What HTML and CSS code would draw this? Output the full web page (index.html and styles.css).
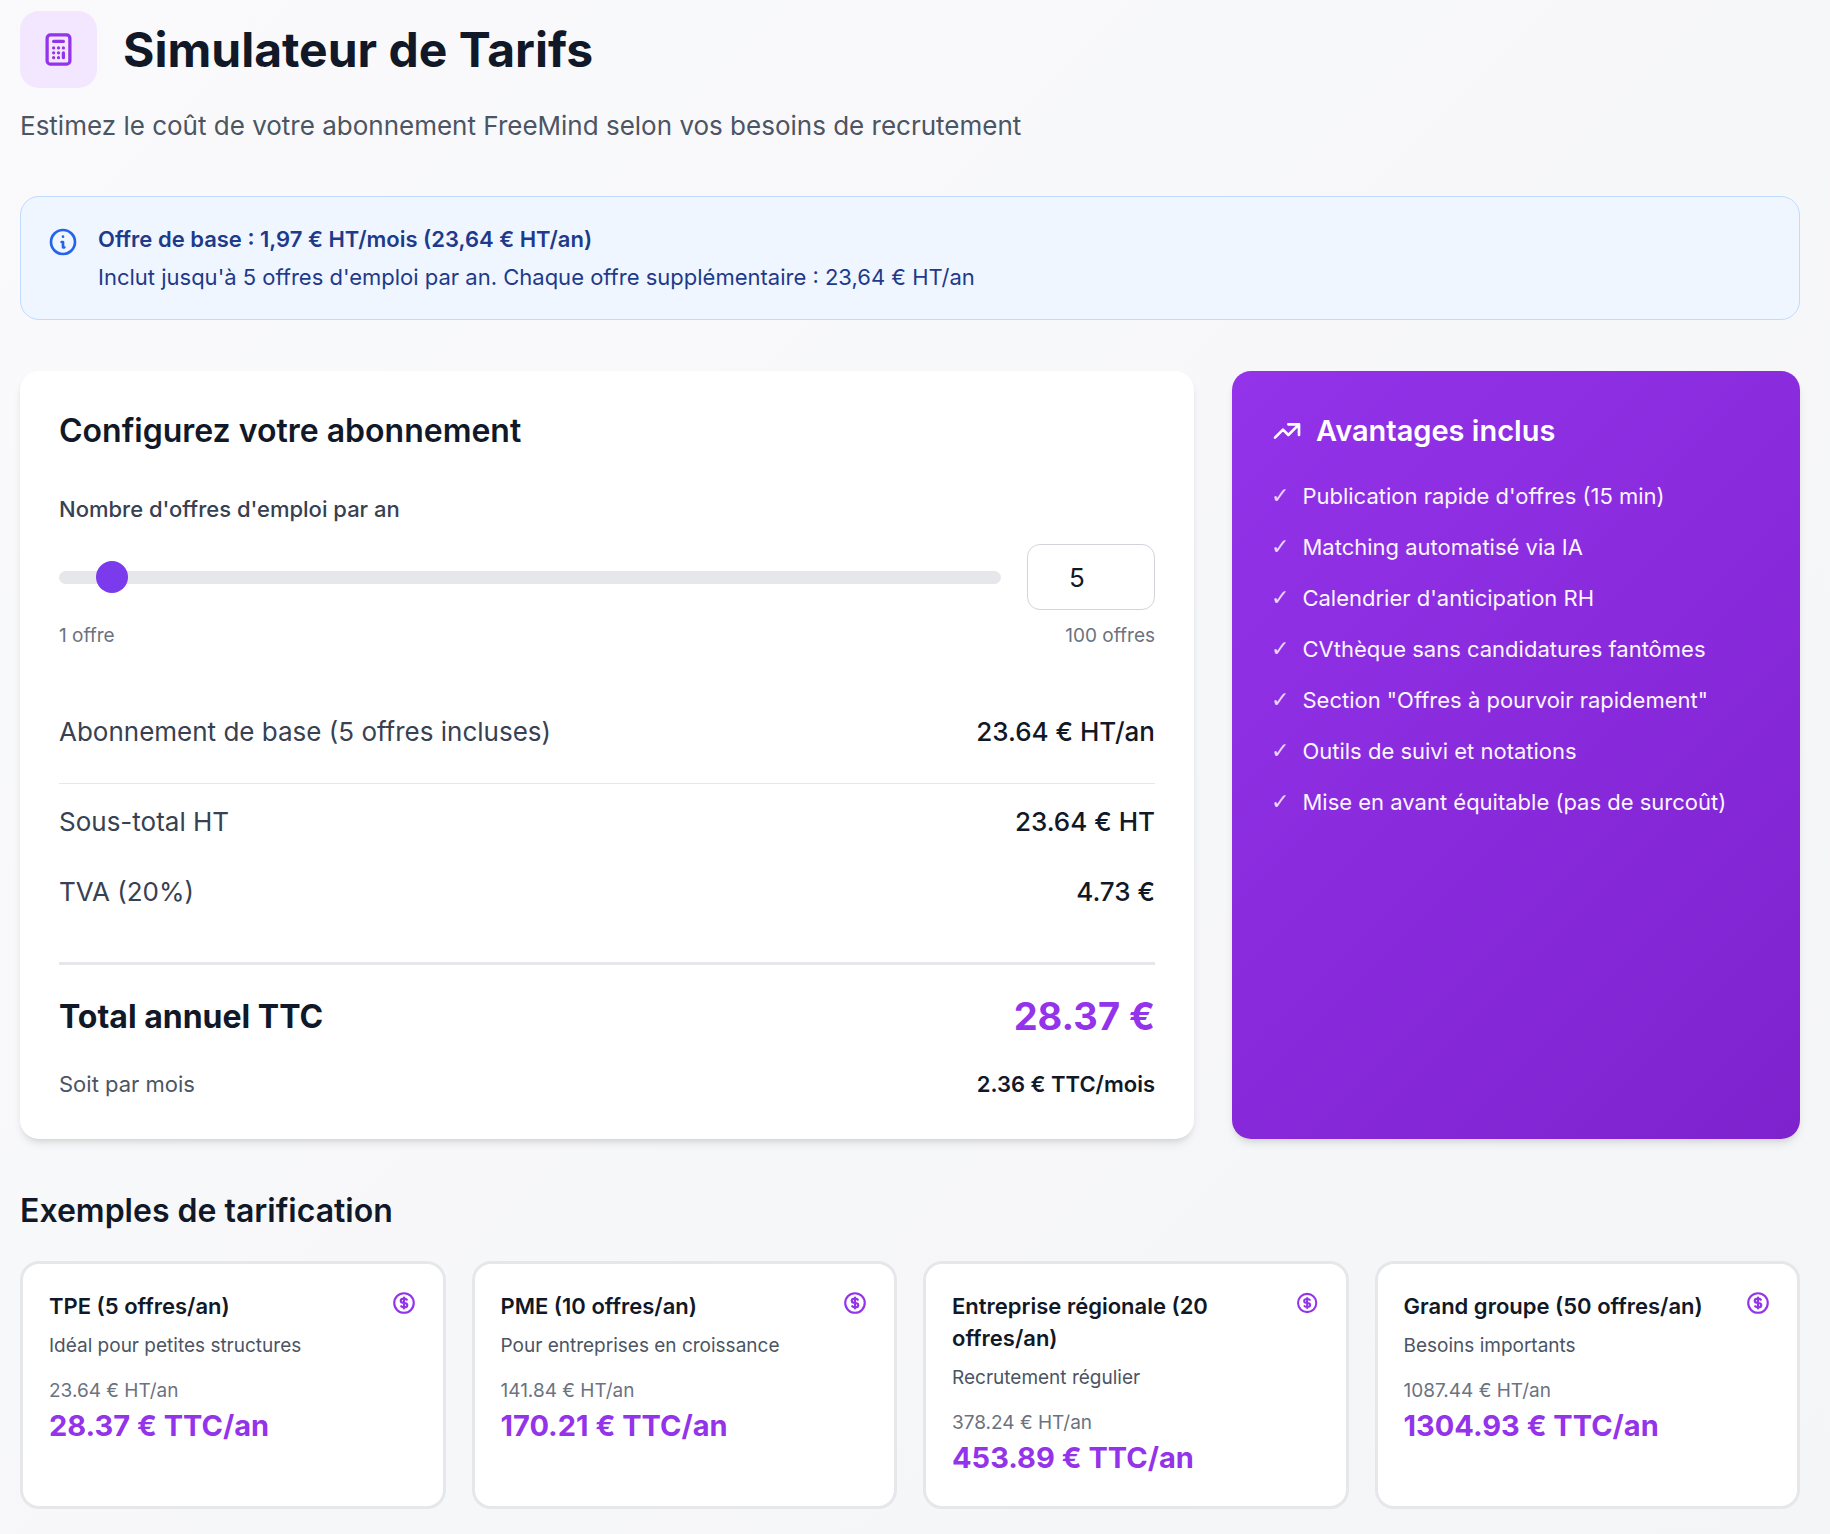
FILE: index.html
```html
<!DOCTYPE html>
<html lang="fr">
<head>
    <meta charset="UTF-8">
    <meta name="viewport" content="width=device-width, initial-scale=1.0">
    <title>Simulateur de Tarifs</title>
    <link rel="stylesheet" href="styles.css">
</head>
<body>
<header class="page-header">
    <div class="title-row">
        <div class="title-icon">
            <svg viewBox="0 0 24 24"><path d="M9 7h6m0 10v-3m-3 3h.01M9 17h.01M9 14h.01M12 14h.01M15 11h.01M12 11h.01M9 11h.01M7 21h10a2 2 0 002-2V5a2 2 0 00-2-2H7a2 2 0 00-2 2v14a2 2 0 002 2z"/></svg>
        </div>
        <h1>Simulateur de Tarifs</h1>
    </div>
    <p>Estimez le coût de votre abonnement FreeMind selon vos besoins de recrutement</p>
</header>

<section class="info">
    <svg viewBox="0 0 24 24"><path d="M13 16h-1v-4h-1m1-4h.01M21 12a9 9 0 11-18 0 9 9 0 0118 0z"/></svg>
    <div class="info-text">
        <p class="info-title">Offre de base : 1,97 € HT/mois (23,64 € HT/an)</p>
        <p>Inclut jusqu'à 5 offres d'emploi par an. Chaque offre supplémentaire : 23,64 € HT/an</p>
    </div>
</section>

<main class="simulator">
    <section class="card config">
        <h2>Configurez votre abonnement</h2>
        <label for="offersRange">Nombre d'offres d'emploi par an</label>
        <div class="slider-row">
            <input type="range" id="offersRange" min="1" max="100" value="5">
            <input type="number" id="offersNumber" min="1" max="100" value="5" aria-label="Nombre d'offres">
        </div>
        <div class="slider-limits">
            <span>1 offre</span>
            <span>100 offres</span>
        </div>
        <dl class="lines">
            <div class="line base">
                <dt>Abonnement de base (5 offres incluses)</dt>
                <dd>23.64 € HT/an</dd>
            </div>
            <div class="line subtotal">
                <dt>Sous-total HT</dt>
                <dd id="subtotal">23.64 € HT</dd>
            </div>
            <div class="line">
                <dt>TVA (20%)</dt>
                <dd id="vat">4.73 €</dd>
            </div>
        </dl>
        <dl class="totals">
            <div class="line total">
                <dt>Total annuel TTC</dt>
                <dd id="total">28.37 €</dd>
            </div>
            <div class="line monthly">
                <dt>Soit par mois</dt>
                <dd id="monthly">2.36 € TTC/mois</dd>
            </div>
        </dl>
    </section>

    <aside class="card benefits">
        <h3>
            <svg viewBox="0 0 24 24"><path d="M13 7h8m0 0v8m0-8l-8 8-4-4-6 6"/></svg>
            Avantages inclus
        </h3>
        <ul>
            <li>Publication rapide d'offres (15 min)</li>
            <li>Matching automatisé via IA</li>
            <li>Calendrier d'anticipation RH</li>
            <li>CVthèque sans candidatures fantômes</li>
            <li>Section "Offres à pourvoir rapidement"</li>
            <li>Outils de suivi et notations</li>
            <li>Mise en avant équitable (pas de surcoût)</li>
        </ul>
    </aside>
</main>

<section class="examples">
    <h2>Exemples de tarification</h2>
    <div class="example-grid">
        <article class="example">
            <div class="example-head">
                <h3>TPE (5 offres/an)</h3>
                <svg viewBox="0 0 24 24"><path d="M12 8c-1.657 0-3 .895-3 2s1.343 2 3 2 3 .895 3 2-1.343 2-3 2m0-8c1.11 0 2.08.402 2.599 1M12 8V7m0 1v8m0 0v1m0-1c-1.11 0-2.08-.402-2.599-1M21 12a9 9 0 11-18 0 9 9 0 0118 0z"/></svg>
            </div>
            <p class="desc">Idéal pour petites structures</p>
            <p class="ht">23.64 € HT/an</p>
            <p class="ttc">28.37 € TTC/an</p>
        </article>
        <article class="example">
            <div class="example-head">
                <h3>PME (10 offres/an)</h3>
                <svg viewBox="0 0 24 24"><path d="M12 8c-1.657 0-3 .895-3 2s1.343 2 3 2 3 .895 3 2-1.343 2-3 2m0-8c1.11 0 2.08.402 2.599 1M12 8V7m0 1v8m0 0v1m0-1c-1.11 0-2.08-.402-2.599-1M21 12a9 9 0 11-18 0 9 9 0 0118 0z"/></svg>
            </div>
            <p class="desc">Pour entreprises en croissance</p>
            <p class="ht">141.84 € HT/an</p>
            <p class="ttc">170.21 € TTC/an</p>
        </article>
        <article class="example">
            <div class="example-head">
                <h3>Entreprise régionale (20 offres/an)</h3>
                <svg viewBox="0 0 24 24"><path d="M12 8c-1.657 0-3 .895-3 2s1.343 2 3 2 3 .895 3 2-1.343 2-3 2m0-8c1.11 0 2.08.402 2.599 1M12 8V7m0 1v8m0 0v1m0-1c-1.11 0-2.08-.402-2.599-1M21 12a9 9 0 11-18 0 9 9 0 0118 0z"/></svg>
            </div>
            <p class="desc">Recrutement régulier</p>
            <p class="ht">378.24 € HT/an</p>
            <p class="ttc">453.89 € TTC/an</p>
        </article>
        <article class="example">
            <div class="example-head">
                <h3>Grand groupe (50 offres/an)</h3>
                <svg viewBox="0 0 24 24"><path d="M12 8c-1.657 0-3 .895-3 2s1.343 2 3 2 3 .895 3 2-1.343 2-3 2m0-8c1.11 0 2.08.402 2.599 1M12 8V7m0 1v8m0 0v1m0-1c-1.11 0-2.08-.402-2.599-1M21 12a9 9 0 11-18 0 9 9 0 0118 0z"/></svg>
            </div>
            <p class="desc">Besoins importants</p>
            <p class="ht">1087.44 € HT/an</p>
            <p class="ttc">1304.93 € TTC/an</p>
        </article>
    </div>
</section>
<script>
    const range = document.getElementById('offersRange');
    const number = document.getElementById('offersNumber');

    function update(value) {
        const offers = Math.min(100, Math.max(1, parseInt(value) || 1));
        const price = 23.64;
        // 5 offers are included, each extra one costs the base price
        const ht = price + Math.max(0, offers - 5) * price;
        const ttc = ht * 1.2;
        range.value = offers;
        number.value = offers;
        document.getElementById('subtotal').innerText = `${ht.toFixed(2)} € HT`;
        document.getElementById('vat').innerText = `${(ht * 0.2).toFixed(2)} €`;
        document.getElementById('total').innerText = `${ttc.toFixed(2)} €`;
        document.getElementById('monthly').innerText = `${(ttc / 12).toFixed(2)} € TTC/mois`;
    }
    range.addEventListener('input', () => update(range.value));
    number.addEventListener('change', () => update(number.value));
</script>
</body>
</html>
```

FILE: styles.css
```css
* {
    box-sizing: border-box;
}
body {
    margin: 0;
    padding: 11px 30px 26px 20px;
    min-height: 100vh;
    font-family: Inter, "Liberation Sans", sans-serif;
    font-size: 22px;
    line-height: 32px;
    color: #111827;
    background: linear-gradient(135deg, #fafafc, #f4f5f7);
}
h1, h2, h3, p, dl, dd, ul {
    margin: 0;
    padding: 0;
}
svg {
    fill: none;
    stroke: currentColor;
    stroke-width: 2;
    stroke-linecap: round;
    stroke-linejoin: round;
}
h2 {
    font-size: 32px;
    line-height: 42px;
    font-weight: 600;
}
.page-header {
    margin-bottom: 51px;
}
.title-row {
    display: flex;
    align-items: center;
    gap: 26px;
    margin-bottom: 19px;
}
.title-icon {
    display: flex;
    padding: 19px;
    border-radius: 19px;
    background: #f2e7fe;
    color: #9333ea;
}
.title-icon svg {
    width: 39px;
    height: 39px;
}
h1 {
    font-size: 48px;
    line-height: 58px;
    font-weight: 700;
}
.page-header p {
    font-size: 26px;
    line-height: 38px;
    color: #4b5563;
}
.info {
    display: flex;
    align-items: flex-start;
    gap: 19px;
    margin-bottom: 51px;
    padding: 26px;
    border: 1px solid #bfdbfe;
    border-radius: 19px;
    background: #f0f6ff;
    color: #1e3a8a;
}
.info svg {
    flex-shrink: 0;
    width: 32px;
    height: 32px;
    margin-top: 3px;
    color: #2563eb;
}
.info-title {
    margin-bottom: 6px;
    font-weight: 600;
}
.simulator {
    display: grid;
    grid-template-columns: repeat(3, 1fr);
    gap: 38px;
    margin-bottom: 51px;
}
.card {
    padding: 39px;
    border-radius: 19px;
    box-shadow: 0 6px 10px -2px rgba(0, 0, 0, 0.1), 0 3px 6px -3px rgba(0, 0, 0, 0.1);
}
.config {
    grid-column: span 2;
    background: #fff;
}
.config h2 {
    margin-bottom: 41px;
}
.config label {
    display: block;
    margin-bottom: 19px;
    font-weight: 500;
    color: #374151;
}
.slider-row {
    display: flex;
    align-items: center;
    gap: 26px;
}
input[type="range"] {
    flex: 1;
    appearance: none;
    height: 13px;
    margin: 0;
    border-radius: 7px;
    background: #e5e7eb;
    cursor: pointer;
}
input[type="range"]::-webkit-slider-thumb {
    appearance: none;
    width: 32px;
    height: 32px;
    border-radius: 50%;
    background: #7c3aed;
}
input[type="number"] {
    width: 128px;
    height: 66px;
    padding: 13px 26px 13px 13px;
    border: 1px solid #d1d5db;
    border-radius: 13px;
    font-family: inherit;
    font-size: 26px;
    color: #111827;
    background: #fff;
    text-align: center;
}
.slider-limits {
    display: flex;
    justify-content: space-between;
    margin-top: 13px;
    font-size: 19px;
    line-height: 26px;
    color: #6b7280;
}
.line {
    display: flex;
    justify-content: space-between;
    align-items: center;
}
.lines {
    display: flex;
    flex-direction: column;
    gap: 19px;
    margin: 51px 0 38px;
    font-size: 26px;
    line-height: 38px;
    color: #374151;
}
.lines dd {
    font-weight: 500;
    color: #111827;
}
.lines .line {
    padding-bottom: 13px;
}
.lines .base {
    padding-top: 13px;
}
.lines .subtotal {
    padding-top: 19px;
    border-top: 1px solid #e5e7eb;
}
.totals {
    padding-top: 26px;
    border-top: 3px solid #e5e7eb;
}
.total {
    margin-bottom: 26px;
    font-size: 32px;
    line-height: 51px;
    font-weight: 700;
}
.total dd {
    font-size: 38px;
    color: #9333ea;
}
.monthly dt {
    color: #4b5563;
}
.monthly dd {
    font-weight: 600;
}
.benefits {
    background: linear-gradient(135deg, #9333ea, #7e22ce);
    color: #fff;
}
.benefits h3 {
    display: flex;
    align-items: center;
    gap: 13px;
    margin-bottom: 28px;
    font-size: 29px;
    line-height: 42px;
    font-weight: 600;
}
.benefits h3 svg {
    width: 32px;
    height: 32px;
}
.benefits ul {
    display: flex;
    flex-direction: column;
    gap: 19px;
    list-style: none;
    color: #faf5ff;
}
.benefits li {
    display: flex;
    gap: 13px;
}
.benefits li::before {
    content: "✓";
    font-family: "DejaVu Sans", sans-serif;
    color: #e9d5ff;
}
.examples h2 {
    margin-bottom: 29px;
}
.example-grid {
    display: grid;
    grid-template-columns: repeat(4, 1fr);
    gap: 26px;
}
.example {
    padding: 26px;
    border: 3px solid #e5e7eb;
    border-radius: 19px;
    background: #fff;
}
.example-head {
    display: flex;
    justify-content: space-between;
    align-items: flex-start;
    margin-bottom: 11px;
}
.example-head svg {
    width: 26px;
    height: 26px;
    color: #9333ea;
}
.example h3 {
    font-size: 22px;
    font-weight: 600;
}
.desc, .ht {
    font-size: 19px;
    line-height: 26px;
}
.desc {
    margin-bottom: 19px;
    color: #4b5563;
}
.ht {
    color: #6b7280;
}
.ttc {
    font-size: 29px;
    line-height: 44px;
    font-weight: 700;
    color: #9333ea;
}
```
